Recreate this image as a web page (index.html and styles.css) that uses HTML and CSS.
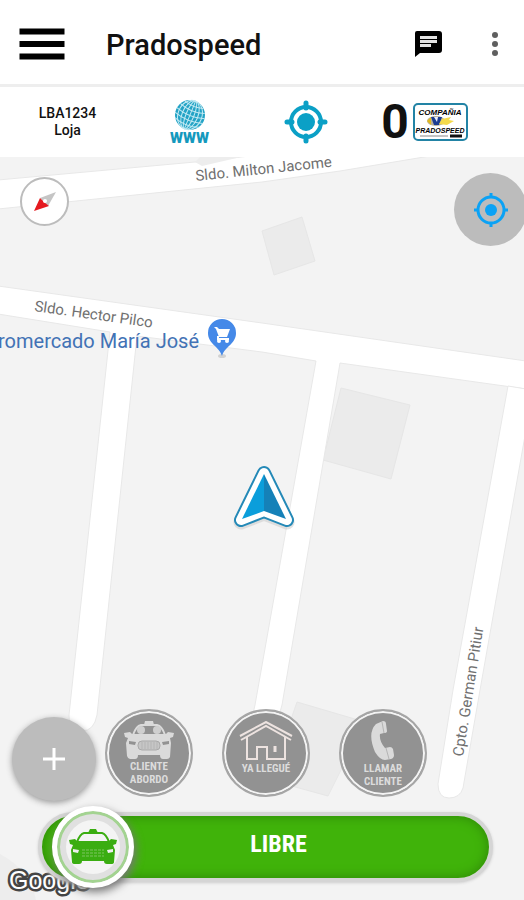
FILE: index.html
```html
<!DOCTYPE html>
<html lang="es">
<head>
<meta charset="utf-8">
<meta name="viewport" content="width=device-width, initial-scale=1">
<title>Pradospeed</title>
<link rel="stylesheet" href="styles.css">
</head>
<body>
<header class="topbar">
  <button class="icon-button" type="button" aria-label="Menú">
    <svg width="46" height="32" viewBox="0 0 46 32"><path d="M0.5 0.5h45v6h-45zM0.5 13h45v6h-45zM0.5 25.5h45v6h-45z"/></svg>
  </button>
  <h1 class="title">Pradospeed</h1>
  <button class="icon-button chat" type="button" aria-label="Mensajes">
    <svg width="28" height="28" viewBox="0 0 28 28"><path d="M3 1h22a3 3 0 0 1 3 3v16a3 3 0 0 1-3 3H6l-5 4V3a2 2 0 0 1 2-2z"/><path fill="#e4e4e4" d="M6 6h17v3H6zM6 10h17v3H6zM6 14h11v3H6z"/></svg>
  </button>
  <button class="icon-button more" type="button" aria-label="Más opciones">
    <svg width="8" height="26" viewBox="0 0 8 26" fill="#5f5f5f"><circle cx="4" cy="4" r="3"/><circle cx="4" cy="13" r="3"/><circle cx="4" cy="22" r="3"/></svg>
  </button>
</header>

<section class="status">
  <p class="unit">LBA1234<br>Loja</p>
  <a class="web" href="#web">
    <svg width="32" height="32" viewBox="0 0 32 32" aria-hidden="true">
      <circle cx="16" cy="16" r="15" fill="#23a3c6"/>
      <g fill="none" stroke="#c3eaf3" stroke-width="1" transform="rotate(22 16 16)">
        <ellipse cx="16" cy="16" rx="4" ry="15"/><ellipse cx="16" cy="16" rx="8" ry="15"/><ellipse cx="16" cy="16" rx="12" ry="15"/><path d="M16 1v30M3 9q13 5 26 0M1 14q15 5 30 0M1 19q15 5 30 0M3 24q13 5 26 0M6 5q10 3 20 0"/>
      </g>
    </svg>
    <span>WWW</span>
  </a>
  <button class="icon-button" type="button" aria-label="Ubicación">
    <svg width="44" height="44" viewBox="0 0 44 44" fill="none" stroke="#0ba0c6">
      <circle cx="22" cy="22" r="15" stroke-width="4"/>
      <circle cx="22" cy="22" r="9" fill="#0ba0c6" stroke="none"/>
      <path d="M22 3v5M22 36v5M3 22h5M36 22h5" stroke-width="5" stroke-linecap="round"/>
    </svg>
  </button>
  <div class="company">
    <span class="count">0</span>
    <svg width="55" height="38" viewBox="0 0 55 38" role="img" aria-label="Compañía Pradospeed">
      <rect x="1" y="1" width="53" height="36" rx="4" fill="#fff" stroke="#2283a5" stroke-width="2"/>
      <text class="logo-text" x="27" y="12" font-size="8">COMPAÑIA</text>
      <ellipse cx="23" cy="18" rx="9" ry="5" fill="#b9b19b"/>
      <path d="M14 18l4-4v8z" fill="#e0b91c"/>
      <path d="M18 14h11l-3 8h-5z" fill="#1c3c91"/>
      <path d="M21 14h4l-1 5z" fill="#e8eefc"/>
      <path d="M29 16l9-2-2 3 5 1-7 4-8-1z" fill="#f4d94b"/>
      <text class="logo-text" x="27" y="30" font-size="7">PRADOSPEED</text>
      <path d="M7 33h28" stroke="#888"/><path d="M37 33h12" stroke="#111" stroke-width="3"/>
    </svg>
  </div>
</section>

<main class="map">
  <svg class="map-canvas" viewBox="0 157 524 743" preserveAspectRatio="xMidYMin slice">
    <rect y="157" width="524" height="743" fill="#f3f3f3"/>
    <g fill="#ebebeb" stroke="#e6e6e6">
      <path d="M262 231L302 217L315 261L274 275z"/>
      <path d="M341 388L410 405L391 479L323 460z"/>
      <path d="M297 702L365 722L328 796L270 780z"/>
    </g>
    <g fill="#fff" stroke="#e8e8e8">
      <path d="M-2 180L195 162L250 156H430L340 171L262 182L-2 209z"/>
      <path d="M-2 286L262 323L526 361V389L340 363L282 705Q276 730 260 724Q250 720 255 705L316 361L262 352L137 336L97 715Q94 731 82 731Q68 731 69 715L110 332L-2 314z"/>
      <path d="M508 386L453 690L438 784Q438 798 449 798Q460 798 463 788L480 690L526 430V389z"/>
    </g>
    <path d="M195 162L202 166L241 157H200z" fill="#ededed"/>
    <path d="M0 854Q30 870 36 900H0z" fill="#ededed"/>
    <g class="street">
      <text transform="translate(196 181) rotate(-6)">Sldo. Milton Jacome</text>
      <text transform="translate(34 311) rotate(8)">Sldo. Hector Pilco</text>
      <text transform="translate(463 757) rotate(-81)">Cpto. German Pitiur</text>
    </g>
    <text class="place" x="199" y="348">romercado María José</text>
    <g>
      <ellipse cx="222" cy="356" rx="4" ry="2" fill="#d2d2d2"/>
      <path d="M222 356C219 346 208 344 208 333A14 14 0 0 1 236 333C236 344 225 346 222 356z" fill="#4589e8"/>
      <path d="M214 327h3l2 2h11l-3 8h-8l-3-8z" fill="#fff"/>
      <path d="M218 336v3h11" fill="none" stroke="#fff" stroke-width="2"/>
      <circle cx="219" cy="341" r="2" fill="#fff"/><circle cx="227" cy="341" r="2" fill="#fff"/>
    </g>
    <g stroke-linejoin="round">
      <path d="M264 473L287 520L264 511L241 520z" fill="#bbb" stroke="#c8c8c8" stroke-width="15" transform="translate(0 2)" opacity=".5"/>
      <path d="M264 473L287 520L264 511L241 520z" fill="#2489b7" stroke="#2489b7" stroke-width="14"/>
      <path d="M264 473L287 520L264 511L241 520z" fill="#fff" stroke="#fff" stroke-width="10"/>
      <path d="M264 474V511L242 519z" fill="#0b9edb"/><path d="M264 474L286 519L264 511z" fill="#1581b8"/>
    </g>
    <text class="google" x="9" y="889">Google</text>
  </svg>

  <button class="compass" type="button" aria-label="Orientar al norte">
    <svg width="24" height="24" viewBox="0 0 24 24"><path d="M23 2L7 8L11 12L15 16z" fill="#c5c5c5"/><path d="M1 21L7 8L11 12L16 16z" fill="#e51a20"/><circle cx="12" cy="11" r="2" fill="#fff"/></svg>
  </button>
  <button class="locate" type="button" aria-label="Mi ubicación">
    <svg width="36" height="36" viewBox="0 0 36 36" fill="none" stroke="#0ba2f5" stroke-width="3"><circle cx="18" cy="18" r="13"/><circle cx="18" cy="18" r="6" fill="#0ba2f5" stroke="none"/><path d="M18 1v5M18 30v5M1 18h5M30 18h5"/></svg>
  </button>

  <div class="dock">
    <div class="actions">
      <button class="add" type="button" aria-label="Agregar">
        <svg width="22" height="22" viewBox="0 0 22 22"><path d="M11 0v22M0 11h22" stroke="#fff" stroke-width="3"/></svg>
      </button>
      <button class="action" type="button">
        <svg width="50" height="38" viewBox="0 0 50 38">
          <path d="M9 14Q12 5 17 4H33Q38 5 41 14" fill="#929292" stroke="#dadada" stroke-width="2"/>
          <path d="M20 4l1-4h8l1 4z" fill="#dadada"/>
          <circle cx="17" cy="9" r="4" fill="#cfcfcf"/><circle cx="33" cy="9" r="4" fill="#cfcfcf"/>
          <path d="M0 12l6-1 2 2H42l2-2 6 1-1 4-3 1 1 5-1 14q-1 2-3 2h-4q-3 0-3-4H14q0 4-3 4H6q-2 0-3-3L2 22l2-5-3-1z" fill="#dadada"/>
          <path d="M5 20l7 1-1 3-6-1zM45 20l-7 1 1 3 6-1z" fill="#929292"/>
          <rect x="14" y="20" width="22" height="9" rx="4" fill="#c6c6c6" stroke="#a9a9a9"/><path d="M18 21v7M21 21v7M24 21v7M27 21v7M30 21v7M33 21v7" stroke="#b4b4b4"/>
        </svg>
        <span>CLIENTE<br>ABORDO</span>
      </button>
      <button class="action" type="button">
        <svg width="54" height="40" viewBox="0 0 54 40" fill="none" stroke="#ede3e0" stroke-width="2">
          <path d="M2 19L27 5L52 19M1 15L27 1L53 15M8 16V38H18V26H28V38H46V16"/><path d="M36 25v6" stroke-width="3"/>
        </svg>
        <span>YA LLEGUÉ</span>
      </button>
      <button class="action" type="button">
        <svg width="24" height="40" viewBox="0 0 24 40" fill="#dadada"><path d="M5 3L12 0Q15 0 15 3L16 10Q16 12 13 12L9 13Q8 20 14 27L19 26Q21 26 22 28L23 34Q23 37 20 38L14 39Q9 39 4 31Q-4 12 5 3z"/><path d="M11 1l2 11M15 27l3 11" stroke="#b4b4b4" fill="none"/></svg>
        <span>LLAMAR<br>CLIENTE</span>
      </button>
    </div>
    <button class="slider" type="button">
      <span class="knob">
        <svg width="48" height="36" viewBox="0 0 48 36">
          <path d="M8 13Q11 5 15 4H33Q37 5 40 13" fill="#f4f4f4" stroke="#3aad11" stroke-width="2"/>
          <path d="M19 4l2-4h6l2 4z" fill="#3aad11"/>
          <path d="M0 11l6-1 2 2H40l2-2 6 1-1 4-3 1 2 5-1 12q0 2-3 2h-4q-3 0-3-3H13q0 3-3 3H6q-3 0-3-2L2 21l2-5-3-1z" fill="#3aad11"/>
          <path d="M4 20l6 1-1 3-5-1zM44 20l-6 1 1 3 5-1z" fill="#eee"/>
          <path d="M13 21h22M13 24h22M13 27h22" fill="none" stroke="#7cc562" stroke-dasharray="3 1"/>
        </svg>
      </span>
      <span class="state">LIBRE</span>
    </button>
  </div>
</main>
</body>
</html>
```
FILE: styles.css
```css
* {
  box-sizing: border-box;
}

body {
  margin: 0;
  min-height: 100vh;
  display: flex;
  flex-direction: column;
  background: #fff;
  font-family: Roboto, "Liberation Sans", sans-serif;
  color: #111;
}

button {
  border: 0;
  padding: 0;
  background: none;
  color: inherit;
  font: inherit;
  cursor: pointer;
}

svg {
  display: block;
}

.topbar {
  display: flex;
  align-items: center;
  min-height: 87px;
  padding: 3px 25px 0 19px;
  border-bottom: 3px solid #eee;
}

.icon-button {
  display: flex;
  justify-content: center;
  align-items: center;
}

.title {
  flex: 1;
  margin: 2px 0 0 41px;
  font-size: 29px;
  line-height: 36px;
  font-weight: 500;
}

.more {
  margin-left: 49px;
}

.status {
  display: grid;
  grid-template-columns: repeat(4, 1fr);
  align-items: center;
  min-height: 70px;
  padding: 0 40px 0 8px;
}

.unit {
  margin: 0;
  text-align: center;
  font-size: 14px;
  line-height: 17px;
  font-weight: 500;
}

.web {
  display: flex;
  flex-direction: column;
  align-items: center;
  padding-left: 6px;
  color: #1599bd;
  font-size: 15px;
  line-height: 15px;
  font-weight: 900;
  text-decoration: none;
}

.company {
  display: flex;
  justify-content: center;
  align-items: center;
  gap: 4px;
}

.count {
  font-size: 48px;
  line-height: 48px;
  font-weight: 700;
}

.logo-text {
  font-family: "Liberation Sans", sans-serif;
  font-weight: 700;
  font-style: italic;
  text-anchor: middle;
}

.map {
  position: relative;
  flex: 1;
  min-height: 480px;
  overflow: hidden;
  background: #f3f3f3;
}

.map-canvas {
  position: absolute;
  inset: 0;
  width: 100%;
  height: 100%;
}

.street {
  font-size: 15px;
  fill: #707070;
}

.place {
  font-size: 20px;
  fill: #4272b5;
  text-anchor: end;
}

.google {
  font-family: "Liberation Sans", sans-serif;
  font-size: 25px;
  fill: #fff;
  stroke: #454545;
  stroke-width: 5px;
  stroke-linejoin: round;
  paint-order: stroke;
}

.compass,
.locate {
  position: absolute;
  display: flex;
  justify-content: center;
  align-items: center;
  border-radius: 50%;
}

.compass {
  top: 20px;
  left: 20px;
  width: 49px;
  height: 49px;
  border: 2px solid #bcbcbc;
  background: #fff;
}

.locate {
  top: 16px;
  right: -3px;
  width: 73px;
  height: 73px;
  background: #bcbcbc;
}

.dock {
  position: absolute;
  left: 0;
  right: 0;
  bottom: 18px;
}

.actions {
  display: flex;
  gap: 29px;
  padding: 0 12px;
}

.add {
  display: flex;
  justify-content: center;
  align-items: center;
  width: 84px;
  height: 84px;
  margin: 8px -20px 0 0;
  border-radius: 50%;
  background: #bcbcbc;
  box-shadow: 0 2px 6px #999;
}

.action {
  display: flex;
  flex-direction: column;
  align-items: center;
  width: 88px;
  height: 88px;
  padding-top: 10px;
  border: 2px solid #a6a6a6;
  border-radius: 50%;
  background: #929292;
  box-shadow: inset 0 0 0 2px #f4f4f4;
  color: #dcdcdc;
  font-family: "Liberation Sans Narrow", "Roboto Condensed", Roboto, sans-serif;
  font-size: 11px;
  line-height: 13px;
  font-weight: 700;
}

.action span {
  margin-top: 1px;
}

.slider {
  display: flex;
  align-items: center;
  width: calc(100% - 69px);
  height: 70px;
  margin: 11px 31px 0 38px;
  padding-left: 10px;
  border: 4px solid #d5d5d5;
  border-radius: 35px;
  background: #40b30a;
  box-shadow: inset 0 0 12px #2d8508, 0 1px 3px #ccc;
}

.knob {
  display: flex;
  justify-content: center;
  align-items: center;
  flex: none;
  width: 82px;
  height: 82px;
  border: 5px solid #fff;
  border-radius: 50%;
  background: #f4f4f4;
  box-shadow: inset 0 0 0 3px #a3d391, inset 0 0 0 9px #e0e0e0, 2px 4px 8px #777;
}

.state {
  flex: 1;
  padding: 0 66px 6px 0;
  color: #fff;
  font-family: "Liberation Sans Narrow", "Roboto Condensed", Roboto, sans-serif;
  font-size: 24px;
  line-height: 32px;
  font-weight: 700;
}
```
